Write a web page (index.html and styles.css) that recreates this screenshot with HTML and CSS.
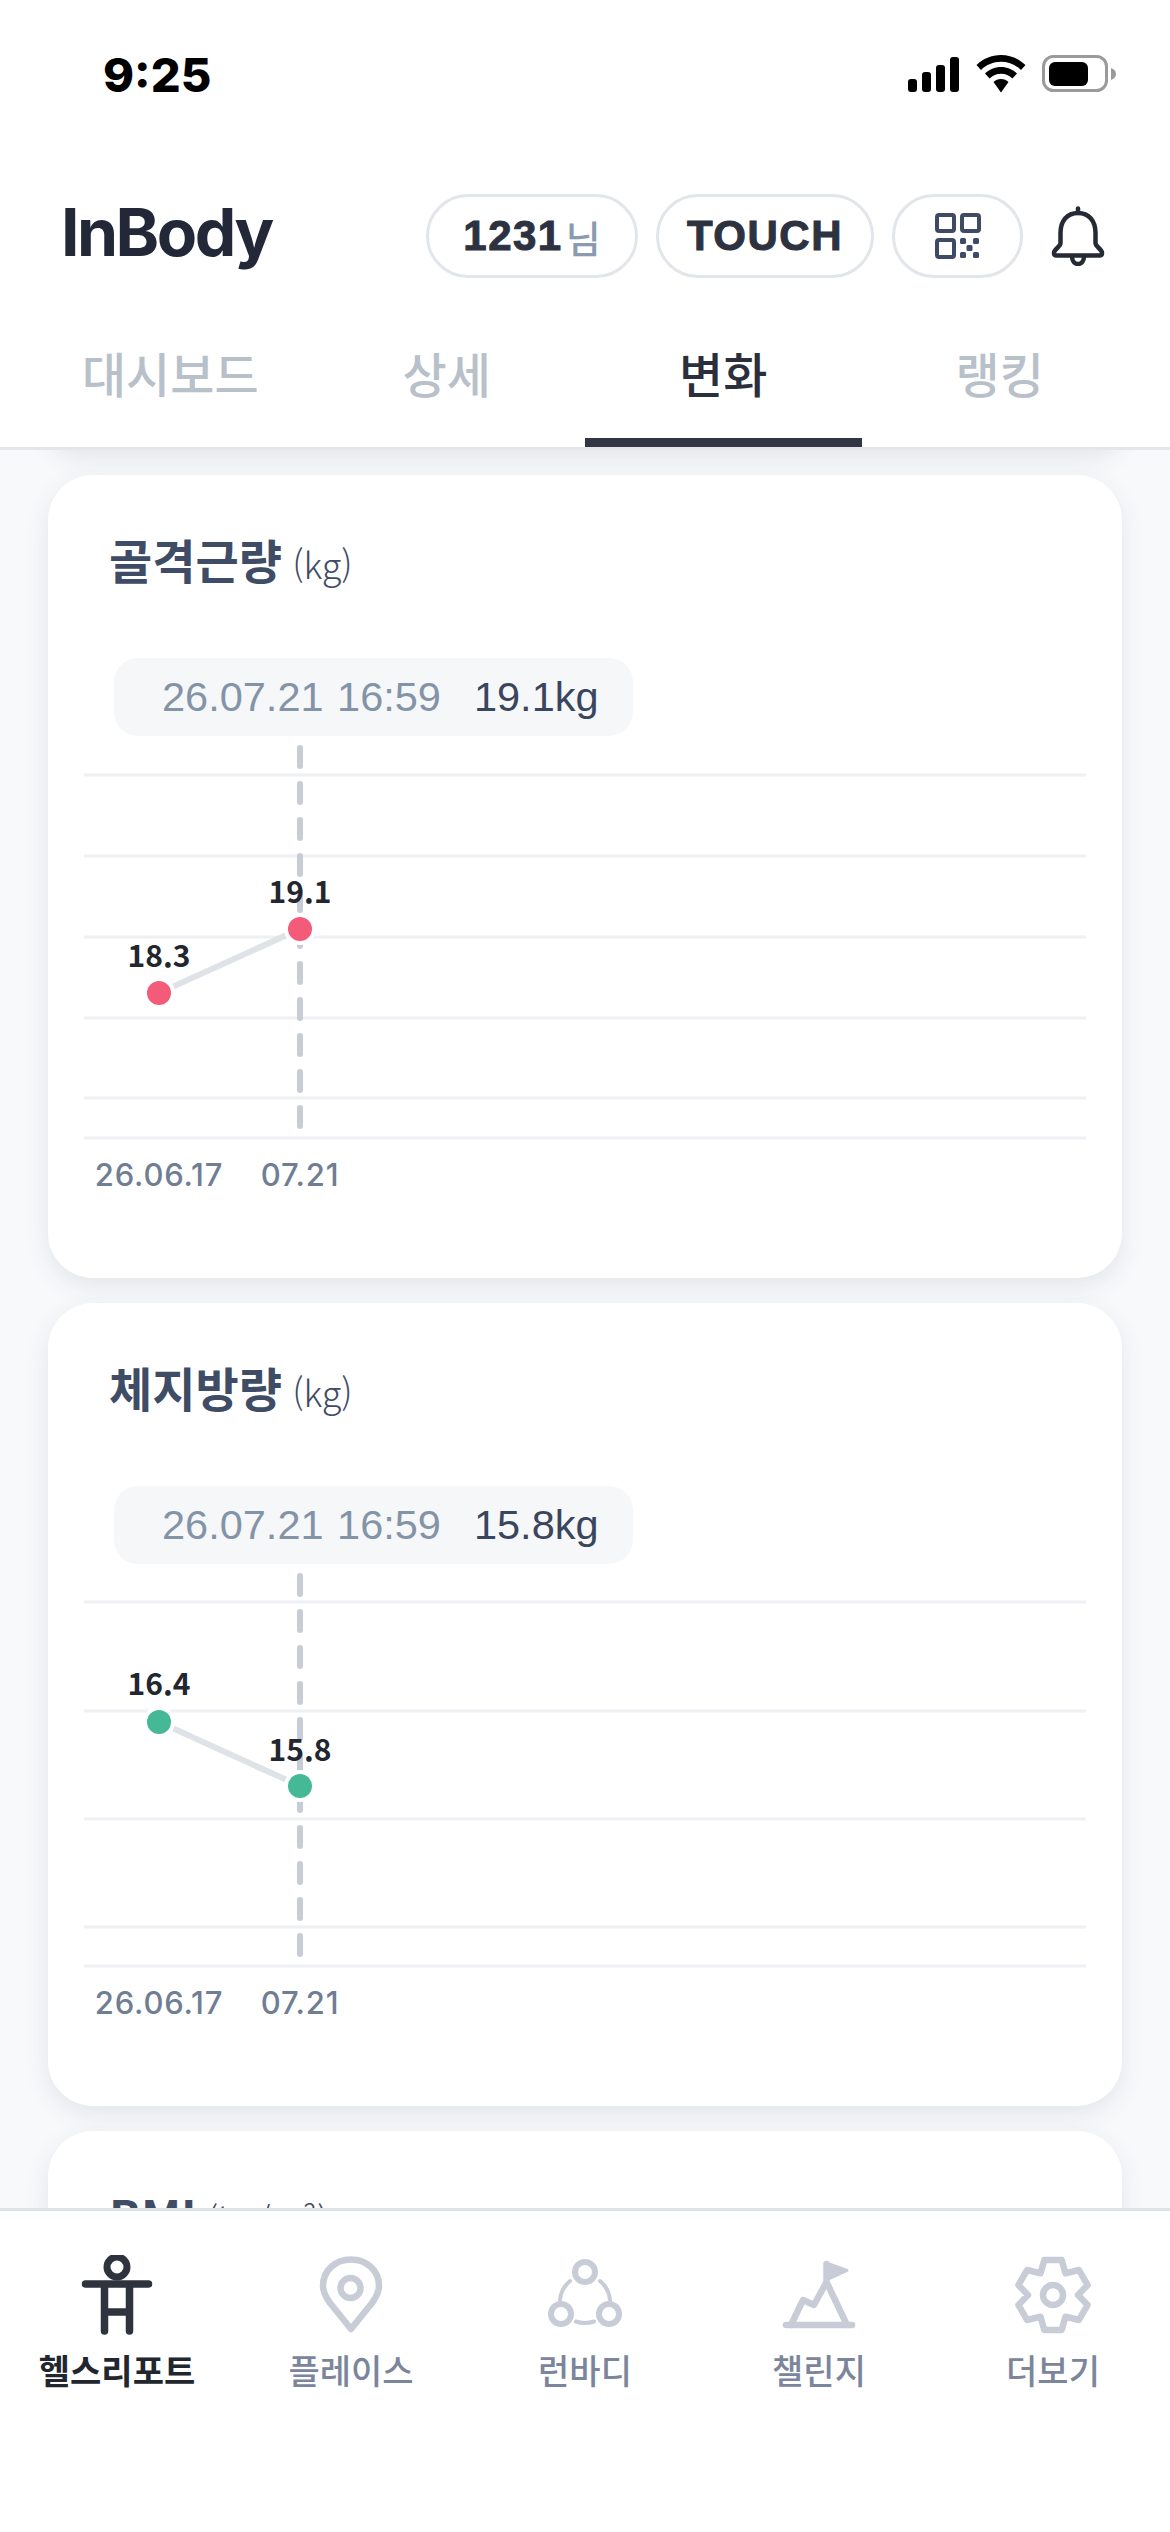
FILE: index.html
```html
<!DOCTYPE html>
<html lang="ko">
<head>
    <meta charset="UTF-8">
    <meta name="viewport" content="width=device-width, initial-scale=1.0">
    <title>InBody</title>
    <link rel="stylesheet" href="styles.css">
</head>
<body>
    <div class="app">
        <header class="app-header">
            <div class="status-bar">
                <span class="time">9:25</span>
                <div class="status-icons">
                    <svg class="signal" width="51" height="36" viewBox="0 0 51 36">
                        <rect x="0" y="23" width="9" height="13" rx="3"/>
                        <rect x="14" y="16" width="9" height="20" rx="3"/>
                        <rect x="28" y="9" width="9" height="27" rx="3"/>
                        <rect x="42" y="1" width="9" height="35" rx="3"/>
                    </svg>
                    <svg class="wifi" width="50" height="38" viewBox="0 0 50 38">
                        <path d="M25 0C15.500 0 7 3.800 0.500 10L5 15C10.300 9.800 17.300 6.800 25 6.800S39.700 9.800 45 15L49.500 10C43 3.800 34.500 0 25 0Z"/>
                        <path d="M25 12C18.800 12 13.200 14.500 9 18.500L13.600 23.400C16.600 20.500 20.600 18.800 25 18.800S33.400 20.500 36.400 23.400L41 18.500C36.800 14.500 31.200 12 25 12Z"/>
                        <path d="M25 24C22 24 19.500 25 17.500 27L25 37.500L32.500 27C30.500 25 28 24 25 24Z"/>
                    </svg>
                    <svg class="battery" width="74" height="38" viewBox="0 0 74 38">
                        <rect x="1.500" y="1.500" width="63" height="34" rx="10" fill="none" stroke="#9a9a9a" stroke-width="3"/>
                        <rect x="7" y="7" width="39" height="24" rx="6"/>
                        <path d="M69 13C72 14 74 16 74 19S72 24 69 25Z" fill="#9a9a9a"/>
                    </svg>
                </div>
            </div>

            <div class="topbar">
                <div class="logo">InBody</div>
                <div class="top-actions">
                    <div class="pill pill-user"><b>1231</b><span>님</span></div>
                    <div class="pill pill-touch">TOUCH</div>
                    <div class="pill pill-qr">
                        <svg width="46" height="46" viewBox="0 0 46 46">
                            <g fill="none" stroke="#3f4a64" stroke-width="4">
                                <rect x="2" y="2" width="17" height="16" rx="2"/>
                                <rect x="27" y="2" width="17" height="16" rx="2"/>
                                <rect x="2" y="27" width="17" height="17" rx="2"/>
                            </g>
                            <g fill="#3f4a64">
                                <rect x="25" y="25" width="6" height="6" rx="1.500"/>
                                <rect x="38" y="25" width="6" height="6" rx="1.500"/>
                                <rect x="31.500" y="32" width="6" height="6" rx="1.500"/>
                                <rect x="25" y="39" width="6" height="6" rx="1.500"/>
                                <rect x="38" y="39" width="6" height="6" rx="1.500"/>
                            </g>
                        </svg>
                    </div>
                    <svg class="bell" width="54" height="60" viewBox="0 0 54 60" fill="none" stroke="#262a34" stroke-width="4.500" stroke-linejoin="round" stroke-linecap="round">
                        <path d="M27 2.500V7"/>
                        <path d="M27 7C16 7 9.500 15 9.500 27V37C9.500 41 3 43 3 47C3 48.500 4 49.500 5.500 49.500H48.500C50 49.500 51 48.500 51 47C51 43 44.500 41 44.500 37V27C44.500 15 38 7 27 7Z"/>
                        <path d="M21 50C21 55 23.500 58 27 58S33 55 33 50"/>
                    </svg>
                </div>
            </div>

            <nav class="tabs">
                <div class="tab">대시보드</div>
                <div class="tab">상세</div>
                <div class="tab active">변화</div>
                <div class="tab">랭킹</div>
            </nav>
        </header>

        <main class="content">
            <section class="card card-prev"></section>

            <section class="card">
                <h3 class="card-title">골격근량 <small>(kg)</small></h3>
                <div class="readout"><span class="readout-date">26.07.21 16:59</span><span class="readout-value">19.1kg</span></div>
                <svg class="chart" width="1074" height="470" viewBox="0 0 1074 470">
                    <g class="grid">
                        <line x1="36" x2="1038" y1="39" y2="39"/>
                        <line x1="36" x2="1038" y1="120" y2="120"/>
                        <line x1="36" x2="1038" y1="201" y2="201"/>
                        <line x1="36" x2="1038" y1="282" y2="282"/>
                        <line x1="36" x2="1038" y1="362" y2="362"/>
                        <line x1="36" x2="1038" y1="402" y2="402"/>
                    </g>
                    <line class="cursor" x1="252" x2="252" y1="12" y2="393"/>
                    <line class="trend" x1="111" y1="257" x2="252" y2="193"/>
                    <circle class="halo" cx="111" cy="257" r="16"/>
                    <circle class="halo" cx="252" cy="193" r="16"/>
                    <circle class="dot-red" cx="111" cy="257" r="12"/>
                    <circle class="dot-red" cx="252" cy="193" r="12"/>
                    <text class="point-label" x="111" y="231">18.3</text>
                    <text class="point-label" x="252" y="167">19.1</text>
                    <text class="axis-label" x="111" y="450">26.06.17</text>
                    <text class="axis-label" x="252" y="450">07.21</text>
                </svg>
            </section>

            <section class="card">
                <h3 class="card-title">체지방량 <small>(kg)</small></h3>
                <div class="readout"><span class="readout-date">26.07.21 16:59</span><span class="readout-value">15.8kg</span></div>
                <svg class="chart" width="1074" height="470" viewBox="0 0 1074 470">
                    <g class="grid">
                        <line x1="36" x2="1038" y1="38" y2="38"/>
                        <line x1="36" x2="1038" y1="147" y2="147"/>
                        <line x1="36" x2="1038" y1="255" y2="255"/>
                        <line x1="36" x2="1038" y1="363" y2="363"/>
                        <line x1="36" x2="1038" y1="402" y2="402"/>
                    </g>
                    <line class="cursor" x1="252" x2="252" y1="12" y2="393"/>
                    <line class="trend" x1="111" y1="158" x2="252" y2="222"/>
                    <circle class="halo" cx="111" cy="158" r="16"/>
                    <circle class="halo" cx="252" cy="222" r="16"/>
                    <circle class="dot-green" cx="111" cy="158" r="12"/>
                    <circle class="dot-green" cx="252" cy="222" r="12"/>
                    <text class="point-label" x="111" y="131">16.4</text>
                    <text class="point-label" x="252" y="197">15.8</text>
                    <text class="axis-label" x="111" y="450">26.06.17</text>
                    <text class="axis-label" x="252" y="450">07.21</text>
                </svg>
            </section>

            <section class="card">
                <h3 class="card-title">BMI <small>(kg/m²)</small></h3>
            </section>
        </main>

        <nav class="bottom-nav">
            <div class="nav-item active">
                <svg width="80" height="80" viewBox="0 0 80 80">
                    <circle class="head" cx="40" cy="12" r="10"/>
                    <path d="M8.500 29H71.500M27.500 29V76M52.500 29V76M27.500 57H52.500"/>
                </svg>
                <span>헬스리포트</span>
            </div>
            <div class="nav-item">
                <svg width="80" height="80" viewBox="0 0 80 80">
                    <path d="M40 74L19 48C14 41 12 36 12 31C12 15 25 4.500 40 4.500S68 15 68 31C68 36 66 41 61 48Z"/>
                    <circle cx="39.500" cy="33" r="10"/>
                </svg>
                <span>플레이스</span>
            </div>
            <div class="nav-item">
                <svg width="80" height="80" viewBox="0 0 80 80">
                    <circle class="node" cx="40" cy="17" r="10"/>
                    <circle class="node" cx="16" cy="59" r="10"/>
                    <circle class="node" cx="64" cy="59" r="10"/>
                    <path class="thin" d="M55 26A28 28 0 0 1 65 45M25 26A28 28 0 0 0 15 45M31 66.500A28 28 0 0 0 49 66.500"/>
                </svg>
                <span>런바디</span>
            </div>
            <div class="nav-item">
                <svg width="80" height="80" viewBox="0 0 80 80">
                    <path d="M7 70H73M47.500 27L68 70M47.500 27L35 50L24 45L12 70M47.500 27V9"/>
                    <path class="flag" d="M47.500 8L68 15.500L47.500 25Z"/>
                </svg>
                <span>챌린지</span>
            </div>
            <div class="nav-item">
                <svg width="80" height="80" viewBox="0 0 80 80">
                    <path d="M31.300 5.100H48.700L52.500 18.300L65.900 15L74.600 30.100L65 40L74.600 49.900L65.900 65L52.500 61.700L48.700 74.900H31.300L27.500 61.700L14.100 65L5.400 49.900L15 40L5.400 30.100L14.100 15L27.500 18.300Z"/>
                    <circle cx="40" cy="40" r="10"/>
                </svg>
                <span>더보기</span>
            </div>
        </nav>
    </div>
</body>
</html>
```

FILE: styles.css
```css
html, body { margin: 0; padding: 0; background: #fff; }
body { font-family: "Noto Sans CJK KR", "Noto Sans", sans-serif; }
.app { width: 1170px; height: 2532px; display: flex; flex-direction: column; overflow: hidden; }

.app-header { position: relative; z-index: 2; background: #fff; }
.status-bar {
    height: 148px;
    display: flex;
    align-items: center;
    justify-content: space-between;
    padding: 0 54px 0 103px;
}
.time { font-family: Inter, sans-serif; font-weight: 800; font-size: 47px; color: #000; }
.status-icons { display: flex; align-items: center; gap: 17px; }
.battery { margin-left: -1px; }

.topbar {
    height: 176px;
    display: flex;
    align-items: center;
    justify-content: space-between;
    padding: 0 65px 0 61px;
}
.logo {
    padding-bottom: 8px;
    font-family: Inter, sans-serif;
    font-weight: 700;
    font-size: 66px;
    letter-spacing: -2.500px;
    color: #222838;
}
.top-actions { display: flex; align-items: center; gap: 18px; }
.pill {
    height: 84px;
    box-sizing: border-box;
    border: 3px solid #e2e6ea;
    border-radius: 42px;
    display: flex;
    align-items: center;
    justify-content: center;
    color: #2d3240;
    font-family: "Liberation Sans", sans-serif;
    font-weight: 700;
    font-size: 42px;
    -webkit-text-stroke: 1px #2d3240;
}
.pill-user { width: 212px; gap: 3px; }
.pill-user b { letter-spacing: 1.500px; }
.pill-user span {
    font-family: "Noto Sans CJK KR", sans-serif;
    font-weight: 500;
    font-size: 38px;
    color: #8a9bb0;
    -webkit-text-stroke: 0;
}
.pill-touch { width: 218px; letter-spacing: 1.500px; }
.pill-qr { width: 131px; }
.bell { margin-left: 10px; }

.tabs {
    display: flex;
    height: 126px;
    box-sizing: border-box;
    padding: 0 32px;
    border-bottom: 3px solid #e4e6ea;
}
.tab {
    flex: 1;
    display: flex;
    align-items: center;
    justify-content: center;
    padding-bottom: 18px;
    border-bottom: 9px solid transparent;
    font-size: 48px;
    font-weight: 500;
    color: #b8c0ca;
}
.tab.active { color: #2b2f3b; border-bottom-color: #323644; }

.content {
    flex: 1;
    min-height: 0;
    overflow: hidden;
    display: flex;
    flex-direction: column;
    gap: 25px;
    padding: 0 48px;
    background: #f8f9fb;
}
.card {
    flex-shrink: 0;
    height: 803px;
    background: #fff;
    border-radius: 45px;
    box-shadow: 0 8px 24px rgba(50, 60, 80, 0.1);
}
.card-prev { height: 60px; margin-top: -60px; }
.card-title {
    margin: 0;
    padding: 54px 0 0 61px;
    height: 60px;
    line-height: 60px;
    font-size: 47px;
    font-weight: 700;
    color: #3f4c66;
}
.card-title small { font-size: 36px; font-weight: 300; margin-left: -3px; }

.readout {
    width: 519px;
    height: 78px;
    box-sizing: border-box;
    margin: 69px 0 0 66px;
    padding-left: 48px;
    display: flex;
    align-items: center;
    gap: 33px;
    background: #f6f7f9;
    border-radius: 24px;
    font-family: "Liberation Sans", sans-serif;
    font-size: 41.500px;
}
.readout-date { color: #8494a8; word-spacing: 2px; }
.readout-value { color: #3a465e; }

.chart { display: block; }
.grid line { stroke: #eef0f3; stroke-width: 3; }
.cursor { stroke: #c8ccd4; stroke-width: 6; stroke-linecap: round; stroke-dasharray: 18 18; }
.trend { stroke: #dfe2e6; stroke-width: 6; }
.halo { fill: #fff; }
.dot-red { fill: #f45b78; }
.dot-green { fill: #45b995; }
.point-label { font-size: 30px; font-weight: 700; fill: #22262f; text-anchor: middle; }
.axis-label {
    font-family: Inter, sans-serif;
    font-size: 31px;
    font-weight: 500;
    letter-spacing: 0.800px;
    fill: #6f7e93;
    text-anchor: middle;
}

.bottom-nav {
    height: 324px;
    box-sizing: border-box;
    display: grid;
    grid-template-columns: repeat(5, 1fr);
    align-items: start;
    padding-top: 44px;
    border-top: 3px solid #dfe2e8;
    background: #fff;
    position: relative;
    z-index: 2;
}
.nav-item { display: flex; flex-direction: column; align-items: center; gap: 15px; color: #7b869c; }
.nav-item svg { fill: none; stroke: #c8ccd6; stroke-width: 6.500; stroke-linecap: round; stroke-linejoin: round; }
.nav-item .thin { stroke-width: 4; }
.nav-item .node { stroke-width: 6; }
.nav-item .flag { fill: #c8ccd6; stroke-width: 3; }
.nav-item span { font-size: 34px; line-height: 40px; font-weight: 500; }
.nav-item.active { color: #22262f; }
.nav-item.active span { font-weight: 700; }
.nav-item.active svg { stroke: #2f333d; stroke-width: 7.500; }
.nav-item.active .head { stroke-width: 7; }
```
